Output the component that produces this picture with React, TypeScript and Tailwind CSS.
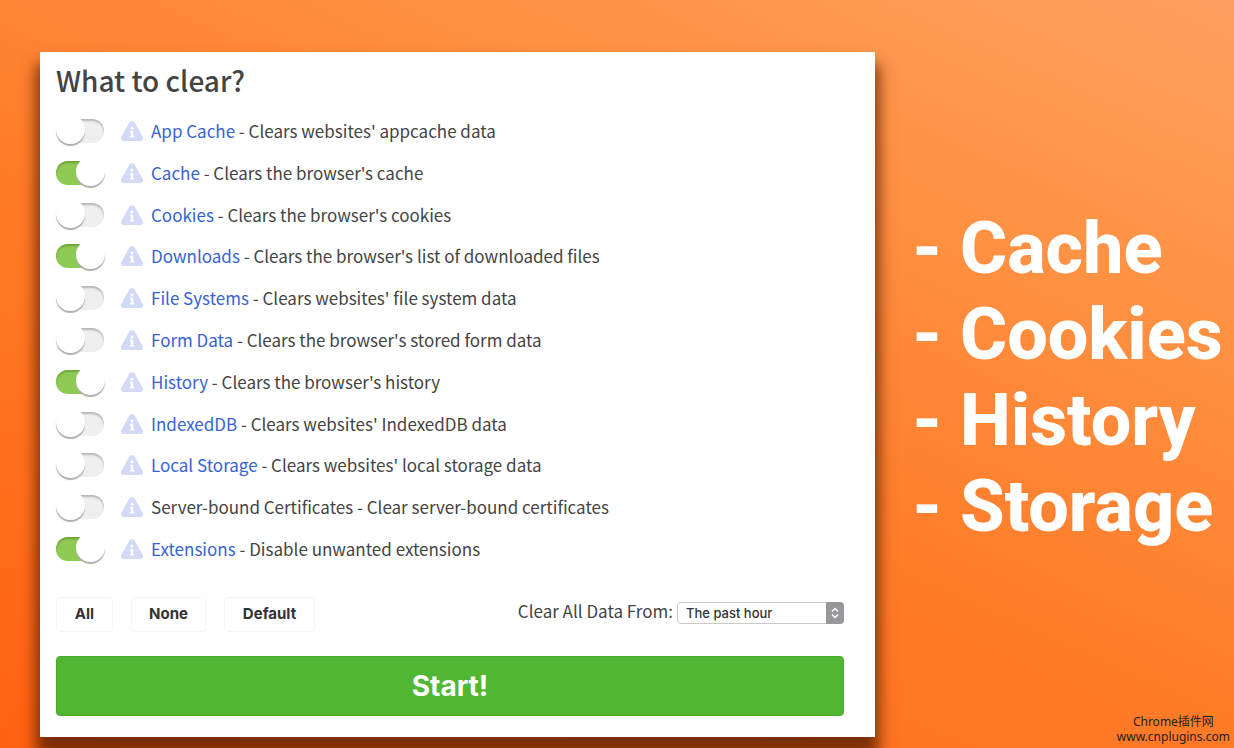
import React, { useState } from "react";

interface ClearOption {
  id: string;
  name: string;
  desc: string;
  link?: boolean;
  on?: boolean;
}

const OPTIONS: ClearOption[] = [
  { id: "appcache",   name: "App Cache",     desc: "Clears websites' appcache data", link: true },
  { id: "cache",      name: "Cache",         desc: "Clears the browser's cache", link: true, on: true },
  { id: "cookies",    name: "Cookies",       desc: "Clears the browser's cookies", link: true },
  { id: "downloads",  name: "Downloads",     desc: "Clears the browser's list of downloaded files", link: true, on: true },
  { id: "filesystem", name: "File Systems",  desc: "Clears websites' file system data", link: true },
  { id: "formdata",   name: "Form Data",     desc: "Clears the browser's stored form data", link: true },
  { id: "history",    name: "History",       desc: "Clears the browser's history", link: true, on: true },
  { id: "indexeddb",  name: "IndexedDB",     desc: "Clears websites' IndexedDB data", link: true },
  { id: "storage",    name: "Local Storage", desc: "Clears websites' local storage data", link: true },
  { id: "certs",      name: "Server-bound Certificates", desc: "Clear server-bound certificates" },
  { id: "extensions", name: "Extensions",    desc: "Disable unwanted extensions", link: true, on: true },
];

const DEFAULTS = OPTIONS.filter(o => o.on).map(o => o.id);
const HIGHLIGHTS = ["Cache", "Cookies", "History", "Storage"];

function InfoIcon() {
  return (
    <svg width="24" height="22" viewBox="0 0 24 22" aria-hidden="true" className="shrink-0">
      <path d="M9.4 2.6C10.5.7 13.5.7 14.6 2.6L22.7 17C23.7 19 22.5 21 20.5 21H3.5C1.5 21 .3 19 1.3 17Z" fill="#d3daf8" />
      <circle cx="12" cy="8" r="1.5" fill="#fff" />
      <path d="M10 10.8H13.2V16H14.3V17.6H9.8V16H10.9V12.3H10Z" fill="#fff" />
    </svg>
  );
}

function Toggle({ id, checked, onChange }: { id: string; checked: boolean; onChange: () => void }) {
  return (
    <input
      id={id}
      type="checkbox"
      checked={checked}
      onChange={onChange}
      className="relative h-6 w-12 shrink-0 cursor-pointer appearance-none rounded-full bg-[#f0eff0] shadow-[inset_0_2px_2px_#b8b4b8] before:absolute before:-top-1 before:left-0 before:size-[29px] before:rounded-full before:bg-white before:shadow-[0_2px_1px_#b0adb0] before:content-[''] checked:bg-[#8fca55] checked:shadow-[inset_0_2px_2px_#6fa53c] checked:before:left-5"
    />
  );
}

export default function App() {
  const [selected, setSelected] = useState<string[]>(DEFAULTS);

  const toggle = (id: string) =>
    setSelected(prev => (prev.includes(id) ? prev.filter(x => x !== id) : [...prev, id]));

  const presets = [
    { label: "All",     ids: OPTIONS.map(o => o.id), width: "w-[57px]" },
    { label: "None",    ids: [],                     width: "w-[75px]" },
    { label: "Default", ids: DEFAULTS,               width: "w-[91px]" },
  ];

  return (
    <div className="flex min-h-screen overflow-hidden bg-linear-[24deg,#ff6212_0%,#ff7c28_45%,#ff9244_75%,#ffa060_100%] pt-[52px] pl-10">
      <main className="mb-[11px] flex min-w-0 flex-1 flex-col bg-white pr-[31px] pb-[21px] pl-4 font-['Noto_Sans_CJK_SC',sans-serif] text-[#444] shadow-[0_16px_14px_4px_rgba(90,30,0,0.8)]">
        <h1 className="pt-2 text-[28px] leading-[40px] font-medium">What to clear?</h1>

        <ul className="mt-2.5 grid h-[460px] auto-rows-fr">
          {OPTIONS.map(({ id, name, desc, link }) => (
            <li key={id} className="flex items-center">
              <Toggle id={id} checked={selected.includes(id)} onChange={() => toggle(id)} />
              <span className="ml-4"><InfoIcon /></span>
              <label htmlFor={id} className="ml-[7px] text-[17px] leading-6 whitespace-nowrap">
                {link ? <a href={`#${id}`} className="text-[#3763d4]">{name}</a> : name} - {desc}
              </label>
            </li>
          ))}
        </ul>

        <div className="mt-[27px] flex items-start">
          <div className="flex gap-[18px]">
            {presets.map(({ label, ids, width }) => (
              <button
                key={label}
                type="button"
                onClick={() => setSelected(ids)}
                className={`${width} h-[35px] rounded-sm border border-[#f6f4f7] font-['Inter',sans-serif] text-[15px] font-bold text-[#333]`}
              >
                {label}
              </button>
            ))}
          </div>

          <div className="ml-auto flex items-start gap-1">
            <label htmlFor="period" className="text-[17px] leading-7">Clear All Data From:</label>
            <div className="relative mt-[5px]">
              <select
                id="period"
                className="block h-[22px] w-[167px] appearance-none rounded-sm border border-[#cbc8cc] bg-white pl-2 font-['Inter',sans-serif] text-[13px] leading-5 font-medium text-[#333]"
              >
                <option>The past hour</option>
                <option>The past day</option>
                <option>The past week</option>
                <option>Everything</option>
              </select>
              <span className="pointer-events-none absolute inset-y-0 right-0 flex w-[18px] items-center justify-center rounded-r-sm bg-[#98979c]">
                <svg width="10" height="14" viewBox="0 0 10 14" fill="none" stroke="#fff" strokeWidth="1.5" aria-hidden="true">
                  <path d="M2 5.5 5 2.5 8 5.5M2 8.5 5 11.5 8 8.5" />
                </svg>
              </span>
            </div>
          </div>
        </div>

        <button
          type="button"
          className="mt-6 h-[60px] w-full rounded-sm border border-[#49ab2c] bg-[#51b733] font-['Inter',sans-serif] text-[28px] font-bold text-white"
        >
          Start!
        </button>
      </main>

      <aside className="flex w-[359px] shrink-0 flex-col justify-between pl-[37px]">
        <ul className="pt-[154px] font-['Roboto',sans-serif] text-[72px] leading-[86px] font-extrabold whitespace-nowrap text-white">
          {HIGHLIGHTS.map(item => (
            <li key={item} className="flex">
              <span className="w-12">-</span>
              {item}
            </li>
          ))}
        </ul>

        <footer className="self-end pr-1 pb-1 text-center font-['Noto_Sans','Noto_Sans_CJK_SC',sans-serif] text-[12px] leading-[15px] text-[#222]">
          <p>Chrome插件网</p>
          <p>www.cnplugins.com</p>
        </footer>
      </aside>
    </div>
  );
}
